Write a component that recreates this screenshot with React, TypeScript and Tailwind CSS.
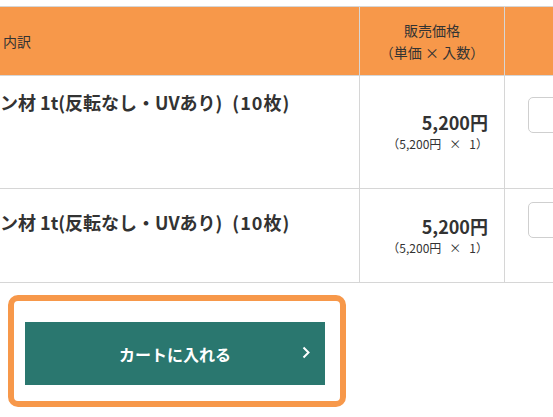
import React from "react";

const font = { fontFamily: '"Noto Sans CJK JP", "Noto Sans", sans-serif' };

function Row({ h, textPt, inputPt }: { h: string; textPt: string; inputPt: string }) {
  return (
    <div className={`flex border-b border-[#d6d6d6] ${h}`}>
      <div className={`w-[360px] shrink-0 border-r border-[#d6d6d6] ${textPt}`}>
        <div className="text-[18px] font-bold leading-[20px] text-[#333] whitespace-nowrap">
          ン材 1t(反転なし・UVあり)
          <span className="ml-[10px] tracking-[1px]">(10枚)</span>
        </div>
      </div>
      <div className="w-[145px] shrink-0 border-r border-[#d6d6d6] flex flex-col justify-center items-end pr-[16px]">
        <div className="text-[18px] font-bold leading-[22px] text-[#333]">5,200円</div>
        <div className="text-[12px] leading-[18px] text-[#333] mt-[2px] whitespace-nowrap">
          （5,200円<span className="mx-[8px]">×</span>1）
        </div>
      </div>
      <div className={`flex-1 pl-[23px] ${inputPt}`}>
        <div className="w-[60px] h-[36px] rounded-[5px] border border-[#cfcfcf] bg-white" />
      </div>
    </div>
  );
}

export default function App() {
  return (
    <div className="w-[553px] h-[417px] overflow-hidden bg-white" style={font}>
      <div className="h-[6px]" />
      <div className="w-[700px] border-t border-[#d6d6d6]">
        <div className="flex h-[69px] bg-[#f7984a] border-b border-[#d6d6d6]">
          <div className="w-[360px] shrink-0 border-r border-[#d6d6d6] flex items-center pl-[3px]">
            <span className="text-[14px] text-[#333]">内訳</span>
          </div>
          <div className="w-[145px] shrink-0 border-r border-[#d6d6d6] flex flex-col items-center justify-center text-[14px] leading-[22px] text-[#333]">
            <div>販売価格</div>
            <div>（単価 × 入数）</div>
          </div>
          <div className="flex-1" />
        </div>
        <Row h="h-[113px]" textPt="pt-[16px]" inputPt="pt-[21px]" />
        <Row h="h-[94px]" textPt="pt-[23px]" inputPt="pt-[13px]" />
      </div>
      <div className="pl-[8px] pt-[12px]">
        <div className="w-[338px] h-[112px] rounded-[10px] border-[6px] border-[#f7984a] pl-[11px] pt-[21px]">
          <button className="relative w-[300px] h-[63px] bg-[#2a776f] text-white text-[16px] font-bold flex items-center justify-center">
            カートに入れる
            <svg className="absolute left-[277px] top-[24px]" width="8" height="13" viewBox="0 0 8 13" fill="none">
              <polyline points="1.5,1.5 6.5,6.5 1.5,11.5" stroke="white" strokeWidth="2" />
            </svg>
          </button>
        </div>
      </div>
    </div>
  );
}
